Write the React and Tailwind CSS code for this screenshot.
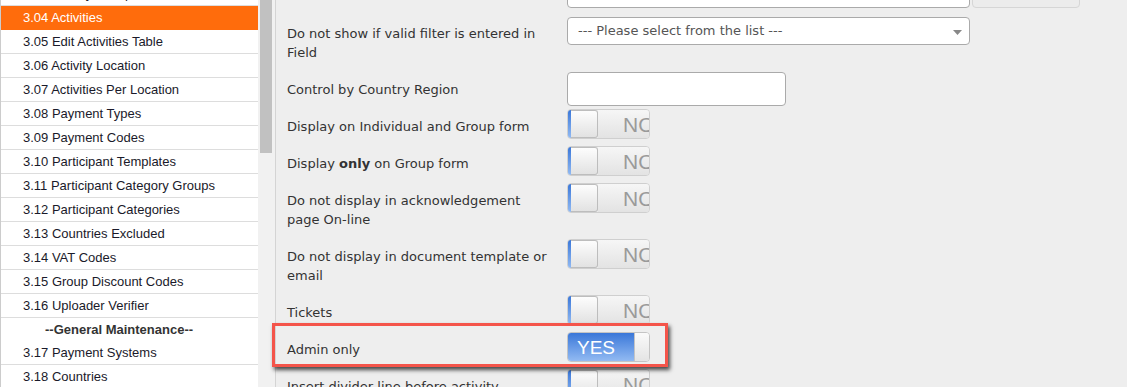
import React from "react";

const sideItems = [
  { t: "3.03 Activity Groups" },
  { t: "3.04 Activities", active: true },
  { t: "3.05 Edit Activities Table" },
  { t: "3.06 Activity Location" },
  { t: "3.07 Activities Per Location" },
  { t: "3.08 Payment Types" },
  { t: "3.09 Payment Codes" },
  { t: "3.10 Participant Templates" },
  { t: "3.11 Participant Category Groups" },
  { t: "3.12 Participant Categories" },
  { t: "3.13 Countries Excluded" },
  { t: "3.14 VAT Codes" },
  { t: "3.15 Group Discount Codes" },
  { t: "3.16 Uploader Verifier" },
  { t: "--General Maintenance--", header: true },
  { t: "3.17 Payment Systems" },
  { t: "3.18 Countries" },
];

function Switch({ on }) {
  if (on) {
    return (
      <div className="flex h-[30px] w-[83px] overflow-hidden rounded-[4px] border border-[#c4c4c4] bg-white">
        <div className="flex h-full w-[66px] items-center bg-linear-to-b from-[#3a77d8] to-[#92baf2] pl-[9px] text-[19px] leading-none text-white" style={{ fontFamily: '"Liberation Sans", Arial, sans-serif' }}>
          YES
        </div>
        <div className="h-full flex-1 border-l border-[#c4c4c4] bg-linear-to-b from-[#fafafa] to-[#e4e4e4]" />
      </div>
    );
  }
  return (
    <div className="flex h-[30px] w-[83px] overflow-hidden rounded-[4px] border border-[#cfcfcf] bg-[#efefef]">
      <div className="h-full w-[3px] bg-linear-to-b from-[#3a77d8] to-[#92baf2]" />
      <div className="h-full w-[27px] rounded-r-[3px] border border-l-0 border-[#bdbdbd] bg-linear-to-b from-[#fdfdfd] to-[#e2e2e2]" />
      <div className="flex h-full min-w-0 flex-1 items-center overflow-hidden whitespace-nowrap bg-linear-to-b from-[#f6f6f6] to-[#e3e3e3] pl-[25px] text-[21px] leading-none text-[#9a9a9a]" style={{ fontFamily: '"Liberation Sans", Arial, sans-serif' }}>
        NO
      </div>
    </div>
  );
}

function Row({ label, children, mb = "mb-[7px]" }) {
  return (
    <div className={`flex items-start ${mb}`}>
      <div className="w-[280px] shrink-0 pr-[14px] pt-[8px] pb-[3px] text-[13px] leading-[19px] text-[#333]">
        {label}
      </div>
      {children}
    </div>
  );
}

export default function App() {
  return (
    <div className="relative flex h-[387px] w-[1127px] overflow-hidden bg-[#eeeeee]">
      {/* Sidebar */}
      <div className="w-[258px] shrink-0 overflow-hidden border-l border-[#cccccc] bg-white" style={{ fontFamily: '"Liberation Sans", Arial, sans-serif' }}>
        <div className="-mt-[18px]">
          {sideItems.map((it, i) =>
            it.header ? (
              <div key={i} className="flex h-[23px] items-center pl-[44px] text-[13px] font-bold text-[#333]">
                {it.t}
              </div>
            ) : (
              <div
                key={i}
                className={
                  it.active
                    ? "flex h-[24px] items-center border-b border-[#ff6c0c] bg-[#ff6c0c] pl-[22px] text-[13px] text-white"
                    : "flex h-[24px] items-center border-b border-[#dddddd] pl-[22px] text-[13px] text-[#1a1a2a]"
                }
              >
                {it.t}
              </div>
            )
          )}
        </div>
      </div>

      {/* Scrollbar */}
      <div className="w-[18px] shrink-0 border-r border-[#d4d4d4] bg-[#f1f1f1] pl-[2px] pr-[3px]">
        <div className="h-[153px] w-full bg-[#c1c1c1]" />
      </div>

      {/* Main content */}
      <div className="flex-1 overflow-hidden pl-[11px]" style={{ fontFamily: '"DejaVu Sans", Verdana, sans-serif' }}>
        <div className="-mt-[22px]">
          <Row label="Use Filter" mb="mb-[8px]">
            <div className="h-[30px] w-[403px] rounded-[4px] border border-[#aaaaaa] bg-white" />
            <div className="ml-[2px] h-[30px] w-[108px] rounded-[4px] border border-[#d6d6d6] bg-[#ececec]" />
          </Row>

          <Row label="Do not show if valid filter is entered in Field">
            <div className="relative mt-[1px] flex h-[28px] w-[403px] items-center rounded-[4px] border border-[#aaaaaa] bg-white pl-[10px] text-[13px] text-[#555]">
              --- Please select from the list ---
              <svg className="absolute right-[7px] top-[12px]" width="9" height="5" viewBox="0 0 9 5">
                <path d="M0 0 L9 0 L4.5 5 Z" fill="#888" />
              </svg>
            </div>
          </Row>

          <Row label="Control by Country Region" mb="mb-[3px]">
            <div className="h-[34px] w-[219px] rounded-[4px] border border-[#aaaaaa] bg-white" />
          </Row>

          <Row label="Display on Individual and Group form">
            <Switch />
          </Row>
          <Row
            label={
              <>
                Display <b>only</b> on Group form
              </>
            }
          >
            <Switch />
          </Row>
          <Row label="Do not display in acknowledgement page On-line">
            <Switch />
          </Row>
          <Row label="Do not display in document template or email">
            <Switch />
          </Row>
          <Row label="Tickets">
            <Switch />
          </Row>
          <Row label="Admin only">
            <Switch on />
          </Row>
          <Row label="Insert divider line before activity">
            <Switch />
          </Row>
        </div>
      </div>

      {/* Highlight annotation */}
      <div className="absolute left-[272px] top-[323px] h-[44px] w-[396px] border-[3px] border-[#f4544a] shadow-[2px_3px_4px_rgba(0,0,0,0.7)]" />
    </div>
  );
}
